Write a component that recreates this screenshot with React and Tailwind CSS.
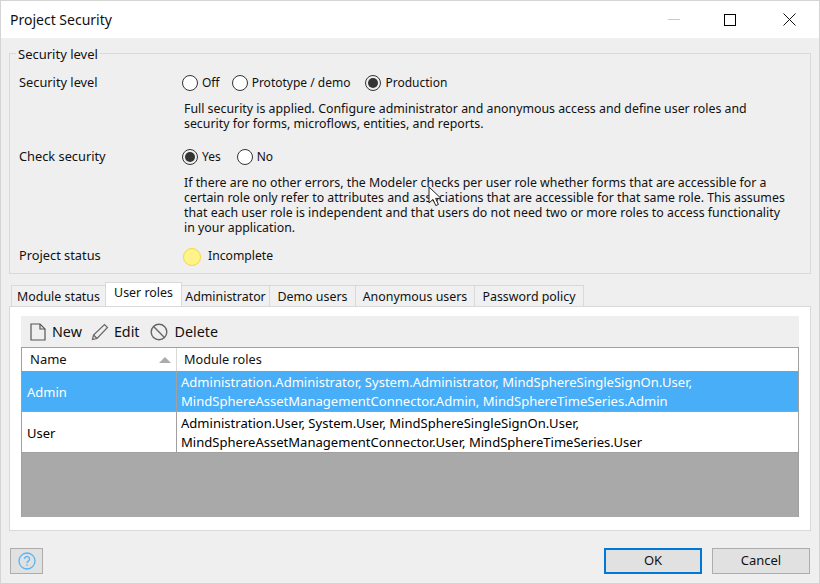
const tabs = [
  { label: 'Module status', width: 'w-[95px]' },
  { label: 'User roles', width: 'w-[77px]', active: true },
  { label: 'Administrator', width: 'w-[89px]' },
  { label: 'Demo users', width: 'w-[87px]' },
  { label: 'Anonymous users', width: 'w-[120px]' },
  { label: 'Password policy', width: 'w-[110px]' },
];

function Radio({ label, checked, className = '' }) {
  return (
    <div className={`flex items-center gap-[4px] text-[12px] ${className}`}>
      <span className={`flex h-[16px] w-[16px] items-center justify-center rounded-full border border-[#333] ${checked ? 'bg-transparent' : 'bg-white'}`}>
        {checked && <span className="h-[10px] w-[10px] rounded-full bg-[#333]" />}
      </span>
      <span>{label}</span>
    </div>
  );
}

function Row({ label, children }) {
  return (
    <div className="flex h-[20px] items-center">
      <div className="w-[163px] shrink-0 text-[12.8px]">{label}</div>
      {children}
    </div>
  );
}

function Description({ children }) {
  return <p className="ml-[165px] mt-[8px] whitespace-nowrap text-[12.35px] leading-[15px]">{children}</p>;
}

function RoleRow({ name, roles, selected }) {
  return (
    <div className={`flex h-[41px] border-b border-[#a0a0a0] ${selected ? 'bg-[#47aef7] text-white' : 'bg-white text-black'}`}>
      <div className="flex w-[155px] shrink-0 items-center border-r border-[#a0a0a0] pl-[5px] pt-[3px]">{name}</div>
      <div className="pl-[4px] pt-[2px] text-[13.05px] leading-[19px]">
        {roles.map((line) => (
          <div key={line} className="whitespace-nowrap">{line}</div>
        ))}
      </div>
    </div>
  );
}

export default function App() {
  return (
    <div className="relative flex h-[584px] w-[820px] flex-col overflow-hidden border border-[#d4d4d4] bg-[#efefef] font-['Noto_Sans',sans-serif] text-[13px] text-[#111]">
      <div className="flex h-[37px] shrink-0 items-center justify-between bg-white pl-[9px]">
        <span className="text-[14px]">Project Security</span>
        <div className="flex items-center">
          <div className="flex w-[58px] justify-center"><span className="h-px w-[12px] bg-[#c8c8c8]" /></div>
          <div className="flex w-[58px] justify-center pr-[4px]"><span className="h-[12px] w-[12px] border border-black" /></div>
          <div className="flex w-[58px] justify-center pr-[2px]">
            <svg width="13" height="13" viewBox="0 0 13 13"><path d="M0.5 0.5L12.5 12.5M12.5 0.5L0.5 12.5" stroke="#111" strokeWidth="1" /></svg>
          </div>
        </div>
      </div>

      <fieldset className="relative mx-[8px] mt-[15px] h-[221px] shrink-0 border border-[#d9d9d9] px-[9px] pt-[19px]">
        <span className="absolute left-[6px] top-[-8px] bg-[#efefef] px-[2px] leading-[16px]">Security level</span>
        <Row label="Security level">
          <Radio label="Off" />
          <Radio label="Prototype / demo" className="ml-[12px]" />
          <Radio label="Production" checked className="ml-[15px]" />
        </Row>
        <Description>
          Full security is applied. Configure administrator and anonymous access and define user roles and<br />
          security for forms, microflows, entities, and reports.
        </Description>
        <div className="mt-[16px]">
          <Row label="Check security">
            <Radio label="Yes" checked />
            <Radio label="No" className="ml-[16px]" />
          </Row>
        </div>
        <Description>
          If there are no other errors, the Modeler checks per user role whether forms that are accessible for a<br />
          certain role only refer to attributes and associations that are accessible for that same role. This assumes<br />
          that each user role is independent and that users do not need two or more roles to access functionality<br />
          in your application.
        </Description>
        <div className="mt-[11px]">
          <Row label="Project status">
            <span className="ml-[1px] mt-[1px] h-[18px] w-[18px] rounded-full border border-[#f5d93c] bg-[#fff38a]" />
            <span className="ml-[7px] text-[12.2px]">Incomplete</span>
          </Row>
        </div>
      </fieldset>

      <div className="ml-[11px] mt-[8px] flex h-[24px] shrink-0 items-end text-[12.4px]">
        {tabs.map((tab) => (
          <div
            key={tab.label}
            className={`flex items-center justify-center border border-b-0 border-[#d9d9d9] ${tab.width} ${
              tab.active ? 'relative z-10 -ml-px h-[24px] bg-white pb-[3px]' : '-ml-px h-[21px] bg-[#f0f0f0] pt-[2px]'
            }`}
          >
            {tab.label}
          </div>
        ))}
      </div>

      <div className="mx-[8px] flex h-[225px] shrink-0 flex-col border border-[#d9d9d9] bg-white px-[11px] pt-[9px] pb-[13px]">
        <div className="flex h-[31px] shrink-0 items-center bg-[#efefef] pl-[9px] text-[14.3px]">
          <svg width="16" height="18" viewBox="0 0 16 18" fill="none" stroke="#555" strokeWidth="1.2"><path d="M1 1h9l5 5v11H1z" /><path d="M10 1v5h5" /></svg>
          <span className="ml-[6px]">New</span>
          <svg className="ml-[9px]" width="18" height="18" viewBox="0 0 18 18" fill="none" stroke="#666" strokeWidth="1.2"><path d="M1.5 16.5l1-4.5L13.5 1.5l3 3L6 15.5z" /><path d="M2.5 12l3.5 3.5" /></svg>
          <span className="ml-[5px]">Edit</span>
          <svg className="ml-[11px]" width="18" height="18" viewBox="0 0 18 18" fill="none" stroke="#666" strokeWidth="1.4"><circle cx="9" cy="9" r="7.8" /><path d="M3.6 3.6l10.8 10.8" /></svg>
          <span className="ml-[6px]">Delete</span>
        </div>
        <div className="flex min-h-0 flex-1 flex-col border-x border-[#a0a0a0] bg-[#a9a9a9]">
          <div className="flex h-[24px] shrink-0 border-t border-[#a0a0a0] bg-white">
            <div className="flex w-[155px] shrink-0 items-center justify-between border-r border-[#d9d9d9] pl-[8px] pr-[5px]">
              <span>Name</span>
              <span className="h-0 w-0 border-x-[6px] border-b-[6px] border-x-transparent border-b-[#ababab]" />
            </div>
            <div className="flex items-center pl-[7px] text-[12.7px]">Module roles</div>
          </div>
          <RoleRow
            name="Admin"
            selected
            roles={[
              'Administration.Administrator, System.Administrator, MindSphereSingleSignOn.User,',
              'MindSphereAssetManagementConnector.Admin, MindSphereTimeSeries.Admin',
            ]}
          />
          <RoleRow
            name="User"
            roles={[
              'Administration.User, System.User, MindSphereSingleSignOn.User,',
              'MindSphereAssetManagementConnector.User, MindSphereTimeSeries.User',
            ]}
          />
        </div>
      </div>

      <div className="mx-[9px] mt-[17px] flex h-[26px] shrink-0 items-stretch justify-between">
        <button className="flex w-[33px] items-center justify-center border border-[#adadad] bg-[#e1e1e1]">
          <svg width="18" height="18" viewBox="0 0 18 18" fill="none" stroke="#55b4f5" strokeWidth="1.3">
            <circle cx="9" cy="9" r="8" />
            <path d="M6.5 7a2.5 2.5 0 1 1 3.8 2.1C9.4 9.7 9 10.2 9 11.2" />
            <path d="M9 12.6v1.5" />
          </svg>
        </button>
        <div className="flex gap-[10px]">
          <button className="w-[98px] border-2 border-[#0078d7] bg-[#e1e1e1]">OK</button>
          <button className="w-[98px] border border-[#adadad] bg-[#e1e1e1]">Cancel</button>
        </div>
      </div>

      <svg className="absolute left-[427px] top-[185px]" width="14" height="21" viewBox="0 0 14 21">
        <path d="M1 1v16l4-3.6 2.8 6.2 2.6-1.2-2.8-6H13z" fill="#fff" stroke="#222" strokeWidth="1" />
      </svg>
    </div>
  );
}
